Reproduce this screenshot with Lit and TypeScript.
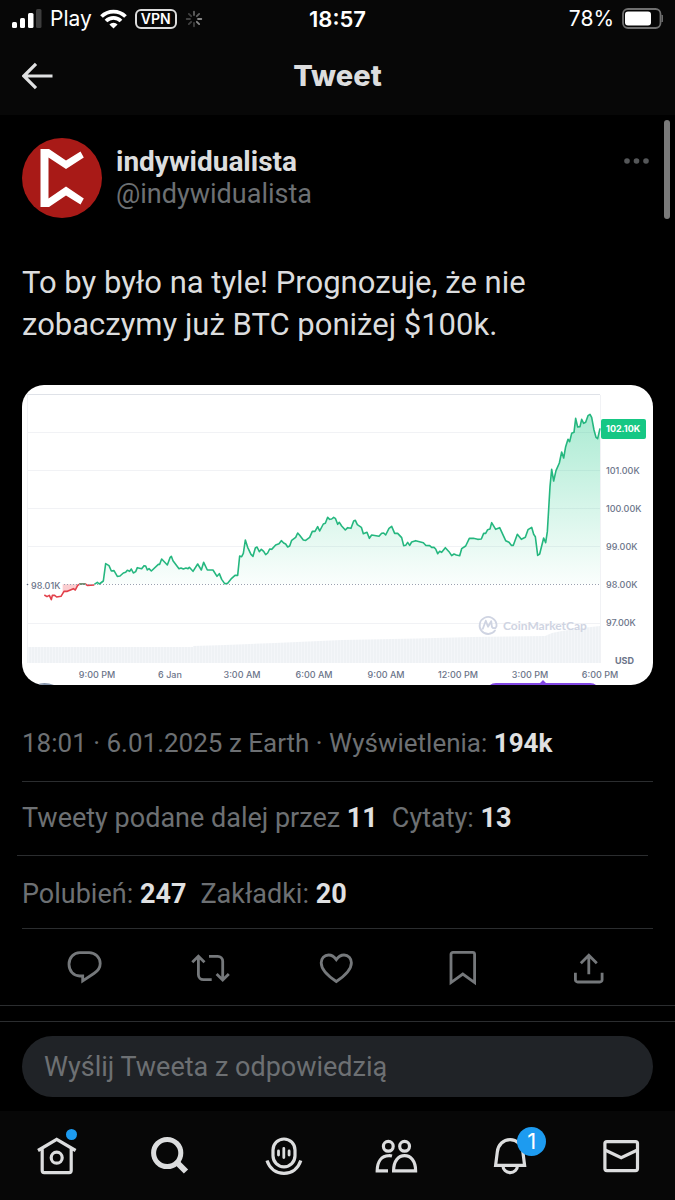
import { LitElement, html, svg, css } from "lit";
import { customElement } from "lit/decorators.js";

type Point = [number, number];

// The price trace, in thirds of a chart unit.
const below: Point[] = [
  [67, 630], [75, 635], [82, 631], [88, 644], [91, 631], [98, 631], [104, 636], [117, 634], [126, 619], [136, 619],
  [147, 614], [154, 611], [160, 615], [167, 601], [174, 597], [182, 597], [190, 597], [196, 601], [217, 600],
];
const above: Point[] = [
  [217, 598], [226, 592], [232, 597], [244, 588], [251, 536], [261, 542], [268, 558], [276, 557], [286, 574], [294, 573],
  [304, 564], [311, 562], [316, 556], [323, 559], [328, 552], [334, 564], [341, 560], [346, 548], [359, 551], [366, 542],
  [371, 543], [376, 555], [381, 551], [388, 558], [409, 538], [413, 538], [419, 522], [436, 540], [444, 518], [448, 514],
  [453, 527], [471, 551], [477, 549], [484, 552], [492, 549], [498, 551], [502, 547], [513, 559], [527, 537], [538, 555],
  [545, 532], [556, 555], [573, 555], [585, 574], [592, 566], [599, 583], [608, 596], [617, 595], [629, 580], [639, 571],
  [647, 571], [653, 513], [659, 515], [664, 505], [670, 465], [677, 487], [687, 508], [693, 514], [700, 489], [705, 486],
  [712, 500], [718, 493], [725, 499], [731, 509], [737, 504], [743, 492], [749, 493], [761, 480], [771, 476], [778, 467],
  [785, 474], [791, 477], [797, 486], [803, 483], [809, 466], [821, 457], [827, 444], [833, 451], [844, 465], [851, 466],
  [863, 457], [871, 439], [879, 439], [887, 425], [893, 438], [904, 417], [910, 415], [917, 397], [923, 403], [929, 402],
  [935, 397], [940, 400], [947, 418], [952, 412], [959, 423], [970, 435], [977, 428], [987, 430], [995, 408], [1000, 406],
  [1006, 419], [1018, 427], [1024, 446], [1035, 442], [1042, 460], [1049, 450], [1071, 454], [1079, 445], [1085, 444],
  [1091, 450], [1101, 430], [1109, 424], [1118, 445], [1127, 445], [1139, 458], [1145, 482], [1151, 481], [1157, 472],
  [1163, 481], [1169, 471], [1181, 467], [1204, 473], [1211, 481], [1223, 482], [1229, 487], [1236, 487], [1241, 492],
  [1247, 506], [1253, 499], [1259, 502], [1270, 488], [1281, 500], [1289, 512], [1296, 507], [1303, 510], [1313, 512],
  [1319, 491], [1331, 483], [1342, 460], [1354, 460], [1367, 463], [1378, 462], [1385, 445], [1391, 445], [1397, 434],
  [1404, 432], [1409, 413], [1421, 433], [1433, 428], [1451, 467], [1461, 472], [1468, 481], [1474, 481], [1486, 448],
  [1498, 463], [1510, 457], [1518, 434], [1529, 427], [1535, 448], [1540, 455], [1547, 511], [1553, 507], [1565, 459],
  [1571, 473], [1576, 440], [1584, 305], [1589, 253], [1595, 288], [1602, 257], [1612, 234], [1619, 201], [1625, 219],
  [1631, 185], [1638, 163], [1643, 170], [1649, 145], [1656, 142], [1661, 100], [1667, 126], [1674, 125], [1679, 103],
  [1685, 115], [1691, 112], [1698, 92], [1704, 88], [1709, 97], [1716, 135], [1722, 157], [1727, 161], [1734, 130],
];
const line = (points: Point[]) => "M" + points.map((p) => p.join(" ")).join("L");

const priceLabels: [number, string][] = [
  [86, "101.00K"], [124, "100.00K"], [162, "99.00K"], [200, "98.00K"], [238, "97.00K"],
];
const timeLabels: [number, string][] = [
  [75, "9:00 PM"], [148, "6 Jan"], [220, "3:00 AM"], [292, "6:00 AM"], [364, "9:00 AM"],
  [436, "12:00 PM"], [508, "3:00 PM"], [578, "6:00 PM"],
];

@customElement("price-chart")
export class PriceChart extends LitElement {
  static styles = css`
    :host { display: block; border-radius: 22px; overflow: hidden; background: #fff; }
    .chart { display: block; width: 100%; height: auto; font-family: Inter, sans-serif; }
    .label { font-size: 9px; font-weight: 500; fill: #6b7489; }
    .time { text-anchor: middle; }
    .strong { font-weight: 700; }
    .tag { font-size: 9px; font-weight: 700; fill: #fff; }
    .mark { font: 700 12px Lato, sans-serif; fill: #cfd4e2; }
  `;
  render() {
    return html`<svg class="chart" viewBox="0 0 631 300" role="img" aria-label="BTC / USD">
      <defs>
        <linearGradient id="gain" gradientUnits="userSpaceOnUse" x1="0" y1="88" x2="0" y2="597">
          <stop offset="0" stop-color="#16c784" stop-opacity=".36" />
          <stop offset="1" stop-color="#16c784" stop-opacity=".02" />
        </linearGradient>
        <pattern id="bars" width="3" height="10" patternUnits="userSpaceOnUse">
          <rect width="3" height="10" fill="#eff2f5" /><rect width="1" height="10" fill="#f4f6f9" />
        </pattern>
      </defs>
      <path d="M5 9.5H578" stroke="#dfe2e8" />
      <path d="M5 47.5H578M5 85.5H578M5 123.5H578M5 161.5H578M5 238.5H578M5.5 10V278M578.5 10V278" stroke="#f1f2f5" fill="none" />
      <path d="M5 262H171V261L203 260L253 258L320 255L395 253.500L450 252L523 251L530 248L540 246L560 243L578 241V278H5Z" fill="url(#bars)" />
      <g transform="scale(.333333)" fill="none" stroke-width="4.800" stroke-linejoin="round">
        <path d="M122 598H190L167 601L160 615L147 614L122 624Z" fill="#ea3943" fill-opacity=".25" />
        <path d="${line(above)}V597H217Z" fill="url(#gain)" />
        <path d="${line(above)}" stroke="#25b77f" />
        <path d="${line(below)}" stroke="#e2404a" />
        <path d="M172 597H190" stroke="#4d9c76" />
      </g>
      <path d="M42 199.500H578" stroke="#9aa1b0" stroke-dasharray="1 2" />
      <circle cx="5.500" cy="199.500" r=".8" fill="#58667e" />
      <text class="label" x="9" y="204">98.01K</text>
      <g fill="none" stroke="#cfd4e2" stroke-width="1.800" stroke-linecap="round" stroke-linejoin="round">
        <path d="M473 245.500A8.500 8.500 0 1 1 474.500 239v2.200q-.5 2-2.500 2t-2.200-2l-.6-5-3.200 5.500-2.200-6-3 8" />
      </g>
      <text class="mark" x="481" y="245">CoinMarketCap</text>
      <rect x="579" y="34" width="45" height="20" rx="2" fill="#16c784" />
      <text class="tag" x="584" y="47">102.10K</text>
      ${priceLabels.map(([y, t]) => svg`<text class="label" x="584" y=${y + 3}>${t}</text>`)}
      <text class="label strong" x="593" y="279">USD</text>
      ${timeLabels.map(([x, t]) => svg`<text class="label time" x=${x} y="293">${t}</text>`)}
      <path d="M468 300q2-2 6-2H518l3-3 3 3H568q4 0 6 2Z" fill="#8247e5" />
      <path d="M14 300q8-4 18 0Z" fill="#8493aa" />
    </svg>`;
  }
}

const icons = {
  reply: svg`<path d="M14.800 4.600h9.400c6 0 11 4.900 11 11 0 4.300-2.300 7.400-6 9.700L17.700 33v-5h-3C8.600 28 4 23 4 16.300 4 9.600 8.600 4.600 14.800 4.600z"/>`,
  retweet: svg`<path d="M1.300 14.300 7.400 8.300l6.100 6M7.400 9v17.700a5 5 0 0 0 5 5h8.300M18 8.300h8.700a5 5 0 0 1 5 5V31M25.600 26l6.100 6 6.100-6"/>`,
  like: svg`<path d="M19.300 11.600C17.200 8.600 14.600 7 11.600 7 7.300 7 4.200 10.300 4.200 14.800c0 7 7.300 13.600 15.100 18.700 7.800-5.100 15.100-11.700 15.100-18.700 0-4.500-3.100-7.800-7.400-7.800-3 0-5.600 1.600-7.700 4.600z"/>`,
  bookmark: svg`<path d="M7 34.600V6.300a2 2 0 0 1 2-2h19.600a2 2 0 0 1 2 2v28.300L18.800 26z"/>`,
  share: svg`<path d="M5.400 24.700v7A2.300 2.300 0 0 0 7.700 34H29.800a2.300 2.300 0 0 0 2.300-2.300v-7M18.800 26.300V7M10.800 15.300l8-8 8 8"/>`,
  home: svg`<path d="M1 14.500 19.700 3.400 38.600 14.500M5.200 13v21.600a2 2 0 0 0 2 2h25a2 2 0 0 0 2-2V13"/><circle cx="19.700" cy="21.700" r="5.500"/>`,
  search: svg`<g stroke-width="5"><circle cx="17.200" cy="17" r="13.600"/><path d="M27 26.500 36 35.500" stroke-width="6"/></g>`,
  spaces: svg`<rect x="10" y="3" width="22" height="27.800" rx="11"/><path d="M4 24.500c2.600 8 9 12.800 17 12.800s14.200-4.800 16.800-12.800"/><path stroke-width="2.800" stroke-linecap="round" d="M15.500 15v4M20.800 12.500v9M26.100 15v4"/>`,
  people: svg`<circle cx="13.300" cy="10.300" r="4.900"/><circle cx="29.600" cy="10.300" r="4.900"/><path d="M18.600 34.800C18.600 25 23.500 19.700 29.600 19.700S40.600 25 40.600 34.800zM17 20c-1.200-.3-2-.4-3.200-.3C6.500 20 2.200 25.500 2.200 34.800H13"/>`,
  bell: svg`<path d="M7.600 29.400 9.300 16C10.100 8.600 15.400 3.600 22.100 3.600S34.100 8.600 34.900 16l1.700 13.400zM15 30a7.200 6.600 0 0 0 14.400 0"/>`,
  mail: svg`<rect x="3.900" y="5.600" width="32.600" height="29" rx="2"/><path d="M4 14 20.200 21.800 36.400 14"/>`,
};
const icon = (name: keyof typeof icons) =>
  html`<svg class="icon" viewBox="0 0 40 40" aria-hidden="true">${icons[name]}</svg>`;

@customElement("app-root")
export class AppRoot extends LitElement {
  static styles = css`
    :host {
      display: flex; flex-direction: column; min-height: 100vh; position: relative;
      background: #000; color: #dcddde; font-family: Roboto, "Noto Sans", sans-serif;
    }
    * { box-sizing: border-box; }
    button, a { background: none; border: 0; padding: 0; margin: 0; color: inherit; font: inherit; text-decoration: none; }
    h1, p { margin: 0; }
    .top { background: #070707; }
    .status {
      display: grid; grid-template-columns: 1fr auto 1fr; align-items: center; height: 37px;
      padding: 0 12px; color: #fff; font: 400 21px/24px Inter, sans-serif;
    }
    .side { display: flex; align-items: center; gap: 8px; }
    .end { justify-content: flex-end; }
    .time { font-weight: 600; font-size: 22px; }
    .vpn { border: 2px solid #ddd; border-radius: 6px; padding: 0 4px; font: 600 14px/16px Inter, sans-serif; }
    .bar { display: grid; grid-template-columns: 1fr auto 1fr; align-items: center; height: 78px; padding: 0 22px; }
    .back { justify-self: start; display: flex; }
    .title { font: 800 29px/36px Inter, sans-serif; }
    .glyph { display: block; flex: none; }
    .tweet { padding: 23px 22px 0; }
    .author { display: flex; gap: 14px; align-items: flex-start; }
    .who { flex: 1; display: flex; flex-direction: column; padding-top: 8px; line-height: 32px; font-size: 27px; }
    .name { font-weight: 700; font-size: 28px; }
    .muted { color: #6d7073; }
    .more { display: flex; padding: 20px 4px; }
    .body { margin-top: 44px; font-size: 31px; line-height: 42px; }
    .photo { margin-top: 39px; }
    .row { font-size: 27px; line-height: 36px; color: #6d7073; border-bottom: 1px solid #2b2d2f; }
    .row b { color: #e0e1e2; }
    .meta { font-size: 26px; padding: 40px 0 20px; }
    .stats { display: flex; gap: 14px; padding: 20px 0 16px; }
    .inset { margin: 0 5px 0 -5px; padding: 18px 0 19px 5px; }
    .actions { display: grid; grid-template-columns: repeat(5, 1fr); padding: 19px 22px 17px; color: #75787b; border-bottom: 1px solid #2b2d2f; }
    .action { display: flex; justify-content: center; }
    .icon {
      display: block; width: 40px; height: 40px; overflow: visible; fill: none;
      stroke: currentColor; stroke-width: 2.8px;
    }
    .reply { margin-top: 15px; border-top: 1px solid #2b2d2f; padding: 14px 22px; }
    .field {
      display: block; width: 100%; height: 61px; border: 0; border-radius: 31px; outline: 0; background: #202327;
      padding: 1px 22px 0; color: #e0e1e2; font: 400 27px/36px Roboto, "Noto Sans", sans-serif;
    }
    .field::placeholder { color: #6d7073; opacity: 1; }
    .nav { flex: 1; display: flex; justify-content: space-between; align-items: flex-start; background: #070707; padding: 25px 34px 24px 37px; }
    .nav .icon { stroke-width: 3.2px; }
    .tab { position: relative; }
    .dot { position: absolute; left: 29px; top: -7px; width: 11px; height: 11px; border-radius: 50%; background: #1d9bf0; }
    .badge {
      position: absolute; left: 29px; top: -9px; width: 29px; height: 29px; border-radius: 50%; background: #1d9bf0;
      color: #fff; text-align: center; font: 400 22px/29px Inter, sans-serif;
    }
    .scroll { position: absolute; right: 5px; top: 120px; width: 6px; height: 99px; border-radius: 3px; background: #7a7a7a; }
  `;
  render() {
    return html`
      <header class="top">
        <div class="status">
          <div class="side">
            <svg class="glyph" width="30" height="20" viewBox="0 0 30 20" fill="#fff" aria-hidden="true">
              <rect y="13" width="5" height="6" rx="1.500"/><rect x="8" y="9" width="5" height="10" rx="1.500"/>
              <rect x="16" y="4" width="5.500" height="15" rx="1.500"/><rect x="24" y="0" width="5.500" height="19" rx="1.500" fill="#3d3d3d"/>
            </svg>
            <span>Play</span>
            <svg class="glyph" width="27" height="20" viewBox="0 0 27 20" fill="none" stroke="#fff" stroke-width="3.800" aria-hidden="true">
              <path d="M1.500 7.500a17 17 0 0 1 24 0M6 12a10.600 10.600 0 0 1 15 0"/><path d="M13.500 19.500 9.400 15.400a5.800 5.800 0 0 1 8.200 0z" fill="#fff" stroke="none"/>
            </svg>
            <span class="vpn">VPN</span>
            <svg class="glyph" width="18" height="18" viewBox="-9 -9 18 18" stroke="#888" stroke-width="1.800" stroke-linecap="round" aria-hidden="true">
              ${[0, 45, 90, 135, 180, 225, 270, 315].map(
                (a) => svg`<path d="M0-4V-7.300" transform="rotate(${a})" opacity=${a === 90 || a === 135 ? 1 : a === 45 || a === 0 ? 0.7 : 0.45} />`
              )}
            </svg>
          </div>
          <span class="time">18:57</span>
          <div class="side end">
            <span>78%</span>
            <svg class="glyph" width="41" height="21" viewBox="0 0 41 21" aria-hidden="true">
              <rect x="1" y="1" width="37.500" height="19" rx="5" fill="none" stroke="#6f6f6f" stroke-width="1.800"/>
              <rect x="3" y="3.500" width="26" height="14" rx="3" fill="#fff"/><path d="M40 7v7q1-1 1-3.500t-1-3.500z" fill="#6f6f6f" stroke="#6f6f6f"/>
            </svg>
          </div>
        </div>
        <div class="bar">
          <button class="back" aria-label="Wstecz">
            <svg class="glyph" width="31" height="28" viewBox="0 0 31 28" fill="none" stroke="#e0e1e2" stroke-width="3.200" aria-hidden="true"><path d="M30.500 14H2M14 1.800 1.800 14 14 26.200"/></svg>
          </button>
          <h1 class="title">Tweet</h1>
          <span></span>
        </div>
      </header>
      <main>
        <article>
          <div class="tweet">
            <div class="author">
              <svg class="glyph" width="80" height="80" viewBox="0 0 80 80" aria-hidden="true">
                <circle cx="40" cy="40" r="40" fill="#a81a17"/>
                <path d="M18.500 11H27L44 22.500 58.500 13.500 61.800 19.500 44 31 26.500 19.500V60.500L44 48.500 61.800 60.500 58.500 66.500 44 57.500 27 69H18.500Z" fill="#fff"/>
              </svg>
              <div class="who"><a class="name" href="#">indywidualista</a><span class="muted">@indywidualista</span></div>
              <button class="more" aria-label="Więcej">
                <svg class="glyph" width="25" height="6" viewBox="0 0 25 6" fill="#555759" aria-hidden="true"><circle cx="3" cy="3" r="2.800"/><circle cx="12.500" cy="3" r="2.800"/><circle cx="22" cy="3" r="2.800"/></svg>
              </button>
            </div>
            <p class="body">To by było na tyle! Prognozuje, że nie zobaczymy już BTC poniżej $100k.</p>
            <price-chart class="photo"></price-chart>
            <div class="row meta">18:01 · 6.01.2025 z Earth · Wyświetlenia: <b>194k</b></div>
            <div class="row stats inset"><span>Tweety podane dalej przez <b>11</b></span><span>Cytaty: <b>13</b></span></div>
            <div class="row stats"><span>Polubień: <b>247</b></span><span>Zakładki: <b>20</b></span></div>
          </div>
          <div class="actions">
            <button class="action" aria-label="Odpowiedz">${icon("reply")}</button>
            <button class="action" aria-label="Podaj dalej">${icon("retweet")}</button>
            <button class="action" aria-label="Polub">${icon("like")}</button>
            <button class="action" aria-label="Dodaj zakładkę">${icon("bookmark")}</button>
            <button class="action" aria-label="Udostępnij">${icon("share")}</button>
          </div>
        </article>
        <div class="reply">
          <input class="field" type="text" aria-label="Wyślij Tweeta z odpowiedzią" placeholder="Wyślij Tweeta z odpowiedzią" />
        </div>
      </main>
      <nav class="nav">
        <a class="tab" href="#" aria-label="Główna">${icon("home")}<span class="dot"></span></a>
        <a class="tab" href="#" aria-label="Szukaj">${icon("search")}</a>
        <a class="tab" href="#" aria-label="Pokoje">${icon("spaces")}</a>
        <a class="tab" href="#" aria-label="Społeczności">${icon("people")}</a>
        <a class="tab" href="#" aria-label="Powiadomienia">${icon("bell")}<span class="badge">1</span></a>
        <a class="tab" href="#" aria-label="Wiadomości">${icon("mail")}</a>
      </nav>
      <div class="scroll"></div>
    `;
  }
}
